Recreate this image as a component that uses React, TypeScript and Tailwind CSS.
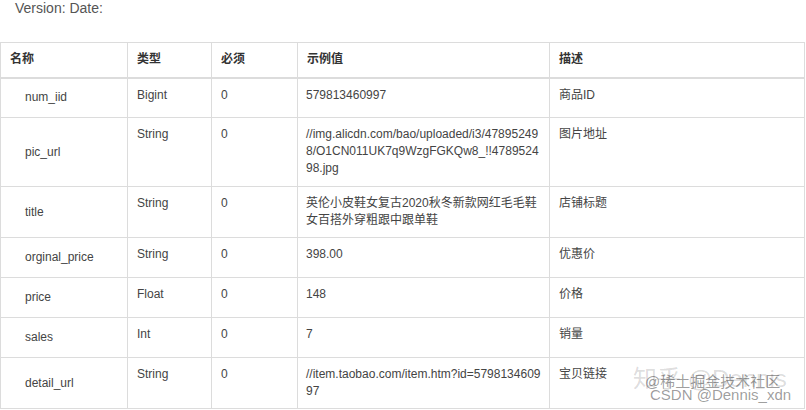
import React from "react";

const rows = [
  { name: "num_iid", type: "Bigint", req: "0", example: "579813460997", desc: "商品ID", h: "h-[40px]" },
  {
    name: "pic_url",
    type: "String",
    req: "0",
    example: "//img.alicdn.com/bao/uploaded/i3/478952498/O1CN011UK7q9WzgFGKQw8_!!478952498.jpg",
    desc: "图片地址",
    h: "h-[69px]",
  },
  {
    name: "title",
    type: "String",
    req: "0",
    example: "英伦小皮鞋女复古2020秋冬新款网红毛毛鞋女百搭外穿粗跟中跟单鞋",
    desc: "店铺标题",
    h: "h-[51px]",
  },
  { name: "orginal_price", type: "String", req: "0", example: "398.00", desc: "优惠价", h: "h-[40px]" },
  { name: "price", type: "Float", req: "0", example: "148", desc: "价格", h: "h-[40px]" },
  { name: "sales", type: "Int", req: "0", example: "7", desc: "销量", h: "h-[40px]" },
  {
    name: "detail_url",
    type: "String",
    req: "0",
    example: "//item.taobao.com/item.htm?id=579813460997",
    desc: "宝贝链接",
    h: "h-[51px]",
  },
];

const App = () => {
  return (
    <div className="relative w-[806px] h-[410px] overflow-hidden bg-white font-['Liberation_Sans','Noto_Sans_CJK_SC',sans-serif] text-[#444]">
      <p className="pl-[15px] text-[14px] leading-[16px] text-[#555]">Version: Date:</p>

      {/* Table */}
      <table className="mt-[26px] w-[804px] table-fixed border-collapse text-[12px] leading-[17px]">
        <colgroup>
          <col className="w-[127px]" />
          <col className="w-[84px]" />
          <col className="w-[86px]" />
          <col className="w-[252px]" />
          <col className="w-[255px]" />
        </colgroup>
        <thead>
          <tr className="h-[35px] border-b-2 border-[#dcdcdc]">
            {["名称", "类型", "必须", "示例值", "描述"].map((h, i) => (
              <th
                key={i}
                className="border border-[#dcdcdc] px-[9px] text-left align-middle font-bold text-[#333]"
              >
                {h}
              </th>
            ))}
          </tr>
        </thead>
        <tbody>
          {rows.map((r, i) => (
            <tr key={i} className={r.h}>
              <td className="border border-[#dcdcdc] pl-[24px] pr-2 align-middle">{r.name}</td>
              <td className="border border-[#dcdcdc] px-[9px] pt-[8px] align-top">{r.type}</td>
              <td className="border border-[#dcdcdc] px-[9px] pt-[8px] align-top">{r.req}</td>
              <td className="border border-[#dcdcdc] px-[8px] pt-[8px] align-top break-all">{r.example}</td>
              <td className="border border-[#dcdcdc] px-[9px] pt-[8px] align-top">{r.desc}</td>
            </tr>
          ))}
        </tbody>
      </table>

      {/* Watermark */}
      <div className="pointer-events-none absolute left-[633px] top-[365px] whitespace-nowrap text-[24px] leading-[28px] text-[#000]/15">
        知乎 @Dennis
      </div>
      <div className="pointer-events-none absolute left-[645px] top-[373px] whitespace-nowrap text-[15px] leading-[18px] text-[#000]/40">
        @稀土掘金技术社区
      </div>
      <div className="pointer-events-none absolute left-[650px] top-[386px] whitespace-nowrap text-[15px] leading-[18px] text-[#000]/40">
        CSDN @Dennis_xdn
      </div>
    </div>
  );
};

export default App;
